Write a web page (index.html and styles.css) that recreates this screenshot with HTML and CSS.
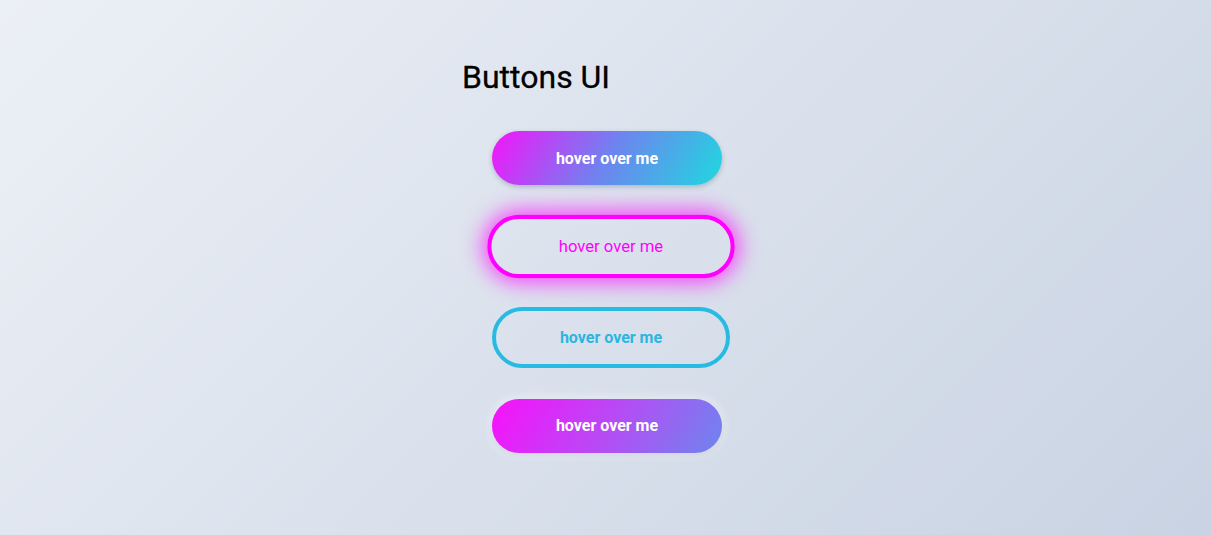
FILE: index.html
```html
<!DOCTYPE html>
<html lang="en">
<head>
<meta charset="utf-8">
<title>Buttons UI</title>
<link rel="stylesheet" href="styles.css">
</head>
<body>
<main class="page">
  <h1 class="title">Buttons UI</h1>
  <div class="buttons">
    <button class="btn btn-gradient">hover over me</button>
    <button class="btn btn-neon">hover over me</button>
    <button class="btn btn-outline">hover over me</button>
    <button class="btn btn-gradient-alt">hover over me</button>
  </div>
</main>
</body>
</html>
```
FILE: styles.css
```css
* { box-sizing: border-box; }
html, body {
  margin: 0;
  height: 100%;
}
body {
  background: linear-gradient(135deg, #ecf0f6 0%, #c9d3e3 100%);
  font-family: Roboto, "Liberation Sans", sans-serif;
  overflow: hidden;
}
.page {
  width: 287px;
  margin: 0 auto;
  padding-top: 59px;
}
.title {
  margin: 0;
  font-size: 32px;
  font-weight: 400;
  line-height: 37px;
  color: #000;
  -webkit-text-stroke: 0.3px #000;
}
.buttons {
  display: flex;
  flex-direction: column;
  align-items: flex-start;
  gap: 30.5px;
  margin-top: 35px;
  padding-left: 30px;
}
.btn {
  font-family: Roboto, "Liberation Sans", sans-serif;
  font-size: 16px;
  font-weight: 700;
  border-radius: 40px;
  cursor: pointer;
  display: flex;
  align-items: center;
  justify-content: center;
  padding: 0;
}
.btn-gradient {
  width: 230px;
  height: 54px;
  border: none;
  color: #fff;
  background: linear-gradient(120deg, #f414fa 0%, #6f83ef 50%, #1fd8df 100%);
  box-shadow: 0 2px 5px rgba(40, 50, 80, 0.25);
}
.btn-neon {
  width: 238px;
  height: 61px;
  border: 4px solid #ff00ff;
  background: transparent;
  color: #ff00ff;
  font-weight: 400;
  transform: scale(1.04);
  box-shadow: 0 0 20px 4px rgba(255, 0, 255, 0.7);
}
.btn-outline {
  width: 238px;
  height: 61px;
  border: 4px solid #27bbe4;
  background: transparent;
  color: #2bb6e0;
}
.btn-gradient-alt {
  width: 230px;
  height: 54px;
  border: none;
  color: #fff;
  background: linear-gradient(120deg, #f910fb 0%, #b84af5 50%, #6d86ee 100%);
  box-shadow: 0 0 10px 2px rgba(255, 255, 255, 0.45), 0 2px 4px rgba(40, 50, 80, 0.12);
}
```
